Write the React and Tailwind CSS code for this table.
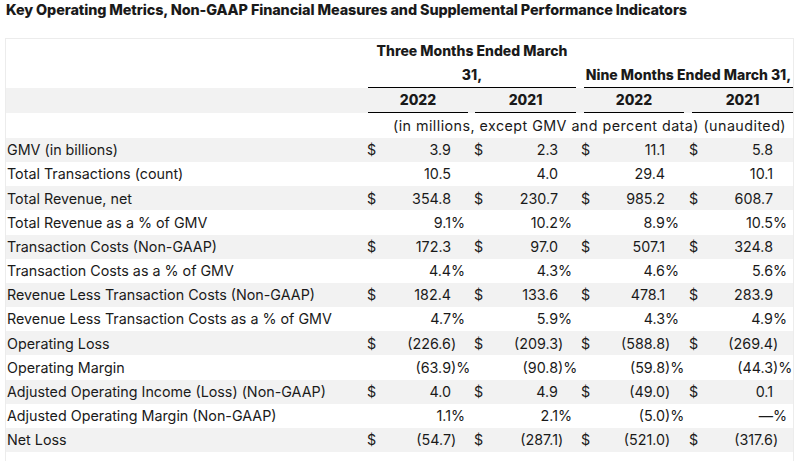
const groups = [107, 107, 108, 104]

// each cell: d = shows "$", v = value, s = suffix (")", "%", ")%")
const rows = [
  { label: 'GMV (in billions)', cells: [{ d: 1, v: '3.9' }, { d: 1, v: '2.3' }, { d: 1, v: '11.1' }, { d: 1, v: '5.8' }] },
  { label: 'Total Transactions (count)', cells: [{ v: '10.5' }, { v: '4.0' }, { v: '29.4' }, { v: '10.1' }] },
  { label: 'Total Revenue, net', cells: [{ d: 1, v: '354.8' }, { d: 1, v: '230.7' }, { d: 1, v: '985.2' }, { d: 1, v: '608.7' }] },
  { label: 'Total Revenue as a % of GMV', cells: [{ v: '9.1', s: '%' }, { v: '10.2', s: '%' }, { v: '8.9', s: '%' }, { v: '10.5', s: '%' }] },
  { label: 'Transaction Costs (Non-GAAP)', cells: [{ d: 1, v: '172.3' }, { d: 1, v: '97.0' }, { d: 1, v: '507.1' }, { d: 1, v: '324.8' }] },
  { label: 'Transaction Costs as a % of GMV', cells: [{ v: '4.4', s: '%' }, { v: '4.3', s: '%' }, { v: '4.6', s: '%' }, { v: '5.6', s: '%' }] },
  { label: 'Revenue Less Transaction Costs (Non-GAAP)', cells: [{ d: 1, v: '182.4' }, { d: 1, v: '133.6' }, { d: 1, v: '478.1' }, { d: 1, v: '283.9' }] },
  { label: 'Revenue Less Transaction Costs as a % of GMV', cells: [{ v: '4.7', s: '%' }, { v: '5.9', s: '%' }, { v: '4.3', s: '%' }, { v: '4.9', s: '%' }] },
  { label: 'Operating Loss', cells: [{ d: 1, v: '(226.6', s: ')' }, { d: 1, v: '(209.3', s: ')' }, { d: 1, v: '(588.8', s: ')' }, { d: 1, v: '(269.4', s: ')' }] },
  { label: 'Operating Margin', cells: [{ v: '(63.9', s: ')%' }, { v: '(90.8', s: ')%' }, { v: '(59.8', s: ')%' }, { v: '(44.3', s: ')%' }] },
  { label: 'Adjusted Operating Income (Loss) (Non-GAAP)', cells: [{ d: 1, v: '4.0' }, { d: 1, v: '4.9' }, { d: 1, v: '(49.0', s: ')' }, { d: 1, v: '0.1' }] },
  { label: 'Adjusted Operating Margin (Non-GAAP)', cells: [{ v: '1.1', s: '%' }, { v: '2.1', s: '%' }, { v: '(5.0', s: ')%' }, { v: '—', s: '%' }] },
  { label: 'Net Loss', cells: [{ d: 1, v: '(54.7', s: ')' }, { d: 1, v: '(287.1', s: ')' }, { d: 1, v: '(521.0', s: ')' }, { d: 1, v: '(317.6', s: ')' }] },
]

function ValueCell({ cell, width }) {
  return (
    <div className="flex shrink-0" style={{ width }}>
      <div className="flex w-[84px] justify-between">
        <span>{cell.d ? '$' : ''}</span>
        <span>{cell.v}</span>
      </div>
      <span className="whitespace-nowrap">{cell.s || ''}</span>
    </div>
  )
}

export default function App() {
  return (
    <div className="w-[800px] h-[461px] overflow-hidden bg-white px-[5px] text-[#1a1a1a] font-['Inter',sans-serif]">
      {/* Title */}
      <h1 className="pl-px text-[14.4px] leading-5 font-extrabold tracking-[-0.1px]">
        Key Operating Metrics, Non-GAAP Financial Measures and Supplemental Performance Indicators
      </h1>

      <div className="mt-[18px] w-[789px] border border-[#ececec] text-[14.3px]">
        {/* Period header */}
        <div className="flex h-[49px] text-[14px] font-extrabold leading-6 whitespace-nowrap">
          <div className="w-[361px] shrink-0" />
          <div className="w-[214px] shrink-0">
            <div className="ml-px w-[208px] border-b border-black text-center">
              Three Months Ended March
              <br />
              31,
            </div>
          </div>
          <div className="w-[212px] shrink-0 flex flex-col justify-end">
            <div className="ml-[3px] w-[209px] border-b border-black text-center">Nine Months Ended March 31,</div>
          </div>
        </div>

        {/* Years */}
        <div className="flex h-[25px] bg-[#f2f2f2] text-[14px] font-extrabold">
          <div className="w-[361px] shrink-0" />
          <div className="w-[107px] shrink-0">
            <div className="ml-px w-[100px] h-[25px] leading-6 border-b border-black text-center">2022</div>
          </div>
          <div className="w-[107px] shrink-0">
            <div className="ml-px w-[101px] h-[25px] leading-6 border-b border-black text-center">2021</div>
          </div>
          <div className="w-[108px] shrink-0">
            <div className="ml-[3px] w-[100px] h-[25px] leading-6 border-b border-black text-center">2022</div>
          </div>
          <div className="w-[104px] shrink-0">
            <div className="ml-[3px] w-[101px] h-[25px] leading-6 border-b border-black text-center">2021</div>
          </div>
        </div>

        {/* Units */}
        <div className="flex h-[24.8px] items-center">
          <div className="w-[361px] shrink-0" />
          <div className="pl-[26px] whitespace-nowrap tracking-[0.45px]">(in millions, except GMV and percent data) (unaudited)</div>
        </div>

        {rows.map((row, i) => (
          <div key={row.label} className={`flex h-[24.2px] items-center ${i % 2 === 0 ? 'bg-[#f2f2f2]' : ''}`}>
            <div className="w-[361px] shrink-0 pl-px">{row.label}</div>
            {row.cells.map((cell, j) => (
              <ValueCell key={j} cell={cell} width={groups[j]} />
            ))}
          </div>
        ))}
        <div className="h-[10px]" />
      </div>
    </div>
  )
}
